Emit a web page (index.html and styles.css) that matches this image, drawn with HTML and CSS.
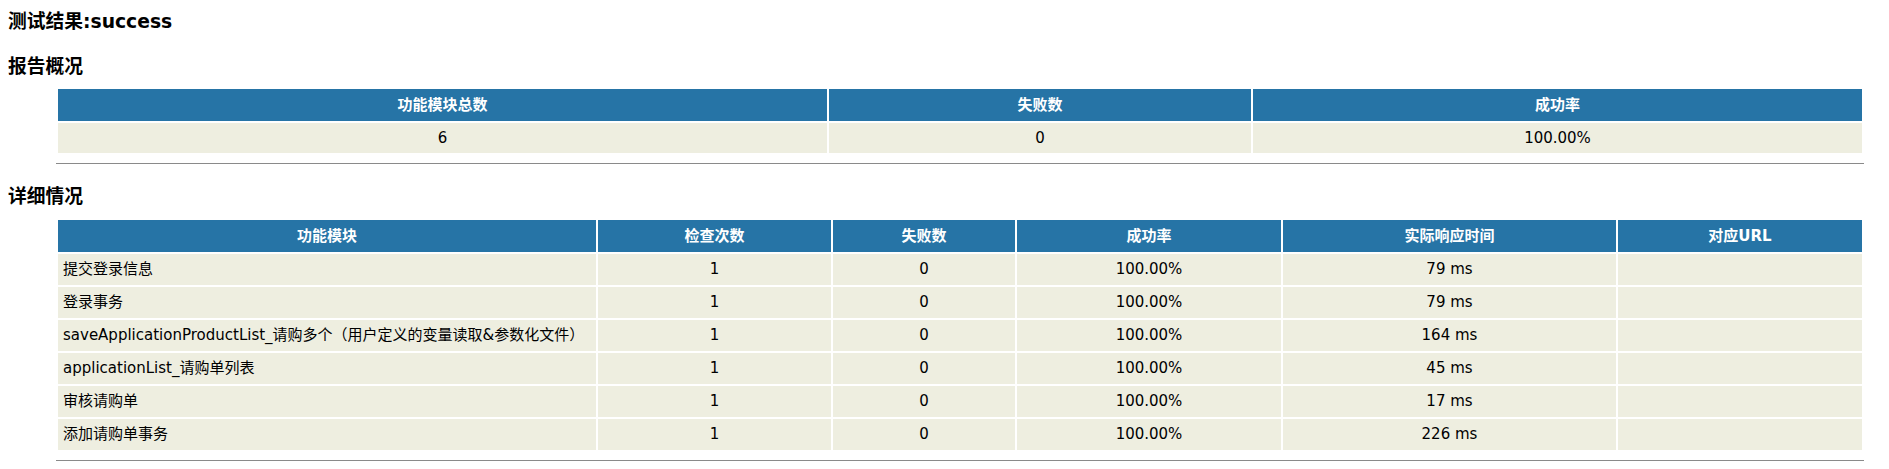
FILE: index.html
```html
<!DOCTYPE html>
<html lang="zh-CN">
<head>
<meta charset="utf-8">
<title>测试结果</title>
<link rel="stylesheet" href="styles.css">
</head>
<body>
<h1 class="title">测试结果:success</h1>
<h2 class="section first">报告概况</h2>
<table class="details summary">
  <thead>
    <tr>
      <th class="s1">功能模块总数</th>
      <th class="s2">失败数</th>
      <th class="s3">成功率</th>
    </tr>
  </thead>
  <tbody>
    <tr>
      <td>6</td>
      <td>0</td>
      <td>100.00%</td>
    </tr>
  </tbody>
</table>
<hr class="rule">
<h2 class="section">详细情况</h2>
<table class="details detail">
  <thead>
    <tr>
      <th class="d1">功能模块</th>
      <th class="d2">检查次数</th>
      <th class="d3">失败数</th>
      <th class="d4">成功率</th>
      <th class="d5">实际响应时间</th>
      <th class="d6">对应URL</th>
    </tr>
  </thead>
  <tbody>
    <tr><td class="name">提交登录信息</td><td>1</td><td>0</td><td>100.00%</td><td>79 ms</td><td></td></tr>
    <tr><td class="name">登录事务</td><td>1</td><td>0</td><td>100.00%</td><td>79 ms</td><td></td></tr>
    <tr><td class="name">saveApplicationProductList_请购多个（用户定义的变量读取&amp;参数化文件）</td><td>1</td><td>0</td><td>100.00%</td><td>164 ms</td><td></td></tr>
    <tr><td class="name">applicationList_请购单列表</td><td>1</td><td>0</td><td>100.00%</td><td>45 ms</td><td></td></tr>
    <tr><td class="name">审核请购单</td><td>1</td><td>0</td><td>100.00%</td><td>17 ms</td><td></td></tr>
    <tr><td class="name">添加请购单事务</td><td>1</td><td>0</td><td>100.00%</td><td>226 ms</td><td></td></tr>
  </tbody>
</table>
<hr class="rule">
</body>
</html>
```

FILE: styles.css
```css
body {
  margin: 8px;
  font-family: "DejaVu Sans", "Noto Sans CJK SC", sans-serif;
  font-size: 15px;
  color: #000000;
  background: #ffffff;
}

.title {
  margin: 1px 0 0;
  font-size: 18.75px;
  font-weight: bold;
  line-height: 26px;
}

.section {
  margin: 20px 0 8px;
  font-size: 18.75px;
  font-weight: bold;
  line-height: 26px;
}

.section.first {
  margin-top: 19px;
  margin-bottom: 7px;
}

.details {
  border-collapse: separate;
  border-spacing: 2px;
  table-layout: fixed;
  width: 1808px;
  margin-left: 48px;
  font-size: 15px;
}

.details th {
  box-sizing: border-box;
  background: #2674a6;
  color: #ffffff;
  font-weight: bold;
  text-align: center;
  white-space: nowrap;
  padding: 5px;
  line-height: 22px;
}

.details td {
  background: #eeeee0;
  text-align: center;
  white-space: nowrap;
  padding: 5px;
  line-height: 20px;
  overflow: hidden;
}

.detail td {
  line-height: 21px;
}

.detail td.name {
  text-align: left;
}

.s1 { width: 769px; }
.s2 { width: 422px; }
.s3 { width: 609px; }

.d1 { width: 538px; }
.d2 { width: 233px; }
.d3 { width: 182px; }
.d4 { width: 264px; }
.d5 { width: 333px; }
.d6 { width: 244px; }

.rule {
  border: none;
  border-top: 1px solid #8a8a8a;
  height: 0;
  width: 1808px;
  margin: 8px 0 0 48px;
}
```
